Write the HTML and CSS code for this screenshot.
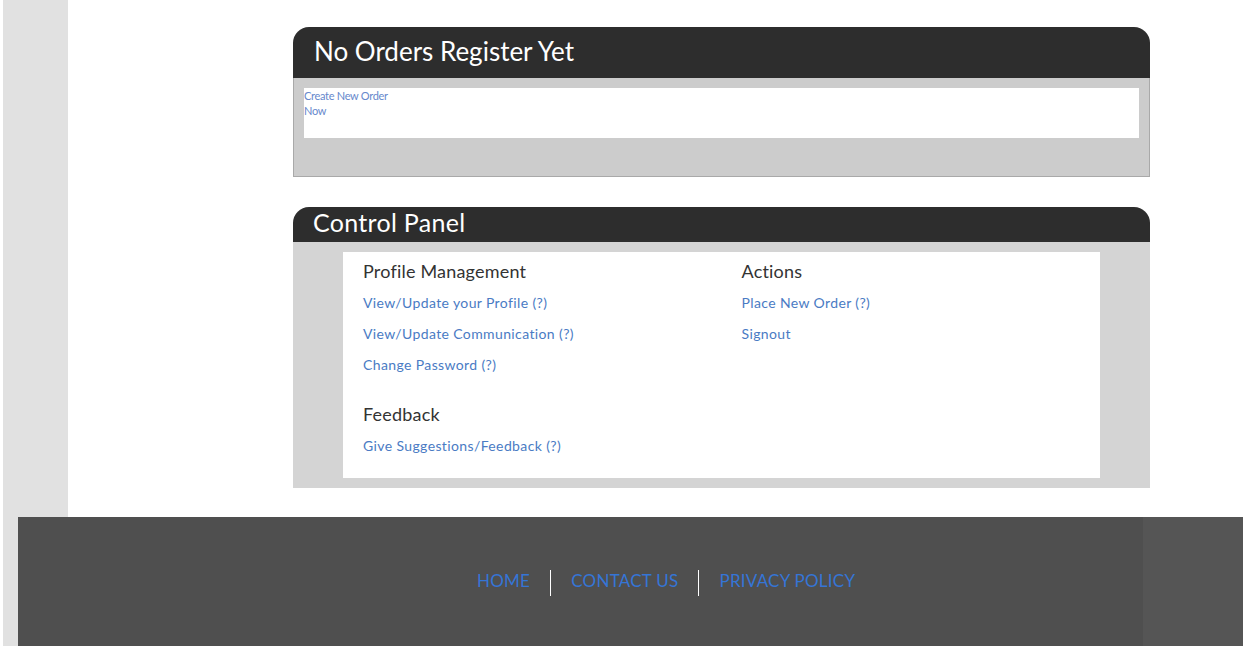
FILE: index.html
```html
<!DOCTYPE html>
<html lang="en">
<head>
<meta charset="utf-8">
<title>Dashboard</title>
<link rel="stylesheet" href="styles.css">
</head>
<body>
<div class="shell">
  <div class="top-row">
    <aside class="side-strip"></aside>
    <main class="main">
      <section class="panel panel-orders">
        <header class="panel-head"><h2 class="panel-title">No Orders Register Yet</h2></header>
        <div class="panel-body">
          <div class="panel-inner">
            <a class="small-link" href="#">Create New Order<br>Now</a>
          </div>
        </div>
      </section>

      <section class="panel panel-control">
        <header class="panel-head panel-head-sm"><h2 class="panel-title panel-title-sm">Control Panel</h2></header>
        <div class="panel-body panel-body-control">
          <div class="control-inner">
            <div class="col">
              <h3 class="group-title">Profile Management</h3>
              <ul class="link-list">
                <li><a href="#">View/Update your Profile (?)</a></li>
                <li><a href="#">View/Update Communication (?)</a></li>
                <li><a href="#">Change Password (?)</a></li>
              </ul>
              <h3 class="group-title group-gap">Feedback</h3>
              <ul class="link-list">
                <li><a href="#">Give Suggestions/Feedback (?)</a></li>
              </ul>
            </div>
            <div class="col">
              <h3 class="group-title">Actions</h3>
              <ul class="link-list">
                <li><a href="#">Place New Order (?)</a></li>
                <li><a href="#">Signout</a></li>
              </ul>
            </div>
          </div>
        </div>
      </section>
    </main>
  </div>
  <div class="foot-row">
    <div class="foot-strip"></div>
    <footer class="footer">
      <nav class="foot-nav">
        <a href="#" class="foot-link">HOME</a>
        <span class="foot-sep"></span>
        <a href="#" class="foot-link">CONTACT US</a>
        <span class="foot-sep"></span>
        <a href="#" class="foot-link">PRIVACY POLICY</a>
      </nav>
    </footer>
    <div class="foot-right"></div>
  </div>
</div>
</body>
</html>
```

FILE: styles.css
```css
* { box-sizing: border-box; }
html, body { margin: 0; padding: 0; background: #ffffff; }
body {
  font-family: "Lato", "Open Sans", "Liberation Sans", sans-serif;
  color: #333333;
}
.shell { padding-left: 3px; }
.top-row { display: flex; align-items: stretch; }
.side-strip { width: 65px; flex: none; background: #e1e1e1; }
.main { flex: 1; padding: 27px 0 29px 225px; }

.panel { width: 857px; }
.panel + .panel { margin-top: 30px; }
.panel-head {
  background: #2d2d2d;
  border-radius: 16px 16px 0 0;
  height: 51px;
  display: flex;
  align-items: center;
  padding-left: 21px;
  padding-bottom: 4px;
}
.panel-head-sm { height: 35px; padding-left: 20px; padding-bottom: 5px; }
.panel-title {
  margin: 0;
  color: #ffffff;
  font-weight: 400;
  font-size: 26px;
  line-height: 30px;
}
.panel-title-sm { font-size: 25px; letter-spacing: 0.3px; }
.panel-body {
  background: #cccccc;
  border: 1px solid #a9a9a9;
  border-top: none;
  padding: 10px 10px 38px 10px;
}
.panel-inner { background: #ffffff; height: 50px; }
.small-link {
  display: block;
  font-size: 11px;
  line-height: 15px;
  letter-spacing: -0.3px;
  color: #6688cc;
  text-decoration: none;
}

.panel-body-control {
  background: #d4d4d4;
  border: none;
  padding: 10px 50px;
}
.control-inner {
  background: #ffffff;
  display: flex;
  padding: 8px 0 17px 0;
}
.col { width: 50%; padding-left: 20px; }
.group-title {
  margin: 0 0 3px 0;
  font-size: 18px;
  font-weight: 400;
  line-height: 22px;
  padding-bottom: 2px;
  letter-spacing: 0.2px;
  color: #333333;
}
.group-gap { margin-top: 23px; }
.link-list { list-style: none; margin: 0; padding: 0; }
.link-list li { line-height: 31px; height: 31px; font-size: 14px; }
.link-list a { color: #4a7bc4; text-decoration: none; letter-spacing: 0.38px; font-weight: 400; }

.foot-row { display: flex; }
.foot-strip { width: 15px; flex: none; background: #e1e1e1; }
.footer {
  width: 1125px;
  flex: none;
  background: #4f4f4f;
  padding: 53px 0 60px 459px;
}
.foot-right { flex: 1; background: #555555; }
.foot-nav { display: flex; align-items: center; height: 26px; }
.foot-link {
  color: #3575d6;
  text-decoration: none;
  font-size: 17px;
  line-height: 22px;
  padding-bottom: 4px;
  letter-spacing: 0.25px;
}
.foot-sep {
  width: 1px;
  height: 26px;
  background: #ffffff;
  margin: 0 20px;
}
```
